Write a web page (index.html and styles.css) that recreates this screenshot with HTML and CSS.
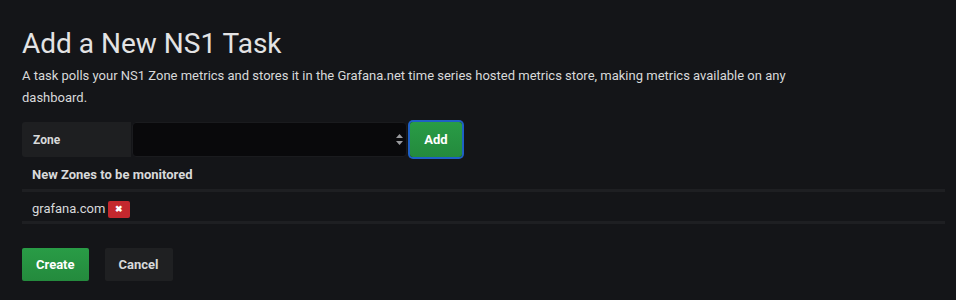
FILE: index.html
```html
<!DOCTYPE html>
<html lang="en">
<head>
  <meta charset="UTF-8">
  <title>Add a New NS1 Task</title>
  <link rel="stylesheet" href="styles.css">
</head>
<body>

<div class="page">
  <h1 class="page-title">Add a New NS1 Task</h1>
  <p class="page-desc">A task polls your NS1 Zone metrics and stores it in the Grafana.net time series hosted metrics store, making metrics available on any dashboard.</p>

  <div class="form-row">
    <span class="form-label">Zone</span>
    <div class="select-wrap">
      <select class="form-select"></select>
      <span class="select-caret">
        <svg width="7" height="11" viewBox="0 0 7 11"><path d="M3.5 0 L7 4 L0 4 Z M0 7 L7 7 L3.5 11 Z" fill="#9a9b9e"/></svg>
      </span>
    </div>
    <button class="btn btn-success btn-focus">Add</button>
  </div>

  <table class="zone-table">
    <thead>
      <tr><th>New Zones to be monitored</th></tr>
    </thead>
    <tbody>
      <tr>
        <td>grafana.com <button class="btn-remove">&#10006;</button></td>
      </tr>
    </tbody>
  </table>

  <div class="actions">
    <button class="btn btn-success">Create</button>
    <button class="btn btn-inverse">Cancel</button>
  </div>
</div>

</body>
</html>
```

FILE: styles.css
```css
body {
  margin: 0;
  background: #141518;
  color: #d8d9da;
  font-family: Roboto, "Liberation Sans", sans-serif;
  font-size: 13px;
}
.page {
  padding: 27px 11px 0 22px;
}
.page-title {
  font-size: 28px;
  font-weight: 400;
  color: #e3e3e4;
  margin: 0 0 4px 0;
  line-height: 34px;
}
.page-desc {
  margin: 0 0 13px 0;
  line-height: 22px;
  max-width: 780px;
}
.form-row {
  display: flex;
  align-items: stretch;
  height: 35px;
}
.form-label {
  width: 98px;
  padding-left: 11px;
  display: flex;
  align-items: center;
  background: #1e1f21;
  border-radius: 3px 0 0 3px;
  font-weight: 700;
  color: #d8d9da;
  font-size: 12px;
}
.select-wrap {
  position: relative;
  width: 275px;
  margin-left: 1px;
}
.form-select {
  width: 100%;
  height: 100%;
  background: #09090b;
  border: 1px solid #1a1b1e;
  border-radius: 4px;
  appearance: none;
  -webkit-appearance: none;
  color: #d8d9da;
}
.select-caret {
  position: absolute;
  right: 4px;
  top: 12px;
  line-height: 0;
}
.btn {
  border: none;
  border-radius: 2px;
  font-family: inherit;
  font-weight: 700;
  font-size: 13px;
  color: #fff;
  cursor: pointer;
}
.btn-success {
  background: linear-gradient(#299c46, #248a3d);
  padding: 0 14px;
}
.btn-focus {
  margin-left: 3px;
  width: 52px;
  padding: 0;
  box-shadow: 0 0 0 2px #1f60c4;
  border-radius: 3px;
}
.btn-inverse {
  background: #1f2022;
  color: #d8d9da;
}
.zone-table {
  width: 100%;
  max-width: 923px;
  border-collapse: collapse;
}
.zone-table th {
  text-align: left;
  font-weight: 700;
  font-size: 13px;
  padding: 3px 10px 0 10px;
  height: 29px;
  border-bottom: 3px solid #1e1f22;
}
.zone-table td {
  padding: 9px 10px 2px 10px;
  height: 18px;
  border-bottom: 3px solid #1e1f22;
  font-size: 13px;
}
.btn-remove {
  width: 22px;
  height: 17px;
  background: #c4282e;
  border: none;
  border-radius: 2px;
  color: #fff;
  font-size: 9px;
  font-weight: 700;
  padding: 0;
  margin-left: -1px;
  vertical-align: 0;
  position: relative;
  top: -1px;
}
.actions {
  display: flex;
  gap: 16px;
  margin-top: 24px;
}
.actions .btn {
  height: 33px;
  padding: 0 14px;
}
```
